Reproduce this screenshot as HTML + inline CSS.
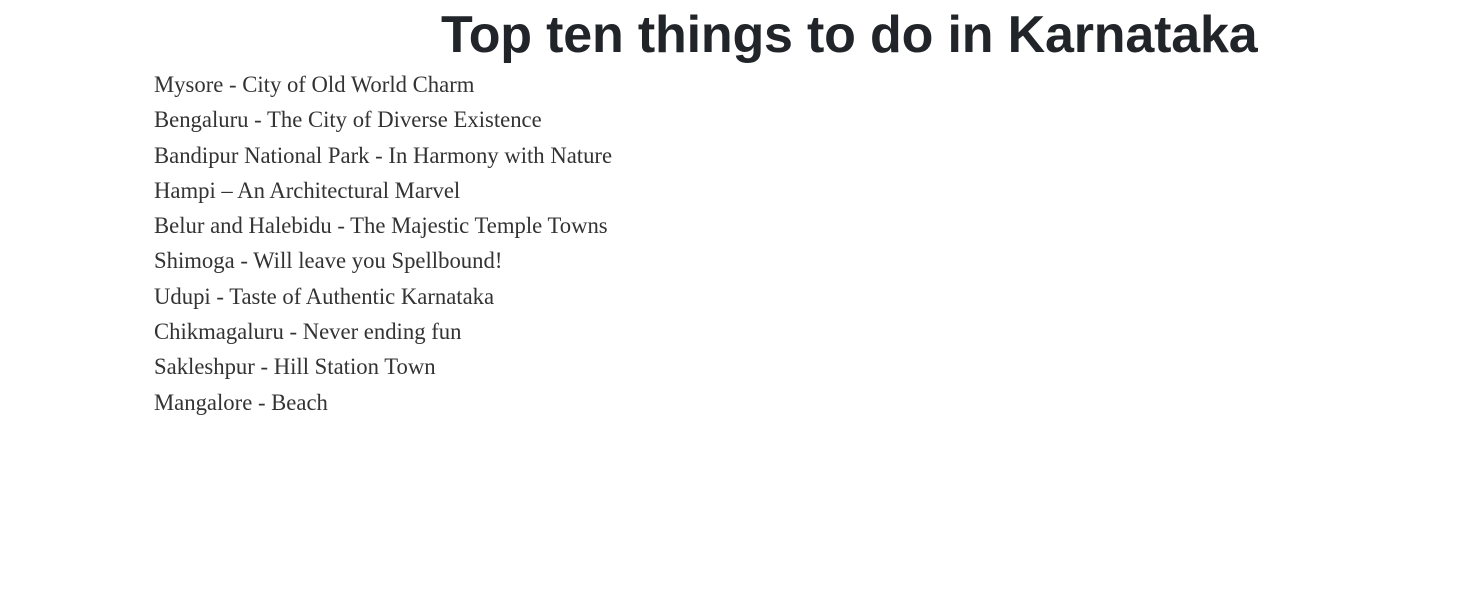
<!DOCTYPE html>
<html><head><meta charset="utf-8"><style>
body{margin:0;width:1480px;height:597px;background:#fff;overflow:hidden;position:relative}
h1{position:absolute;left:441px;top:3px;margin:0;font:bold 52px/64px "Liberation Sans",sans-serif;color:#212529;white-space:nowrap;letter-spacing:-0.18px}
ul{position:absolute;left:154px;top:67px;margin:0;padding:0;list-style:none;font:22.7px/35.3px "Liberation Serif",serif;color:#333}
</style></head><body>
<h1>Top ten things to do in Karnataka</h1>
<ul>
<li>Mysore - City of Old World Charm</li>
<li>Bengaluru - The City of Diverse Existence</li>
<li>Bandipur National Park - In Harmony with Nature</li>
<li>Hampi – An Architectural Marvel</li>
<li>Belur and Halebidu - The Majestic Temple Towns</li>
<li>Shimoga - Will leave you Spellbound!</li>
<li>Udupi - Taste of Authentic Karnataka</li>
<li>Chikmagaluru - Never ending fun</li>
<li>Sakleshpur - Hill Station Town</li>
<li>Mangalore - Beach</li>
</ul>
</body></html>
